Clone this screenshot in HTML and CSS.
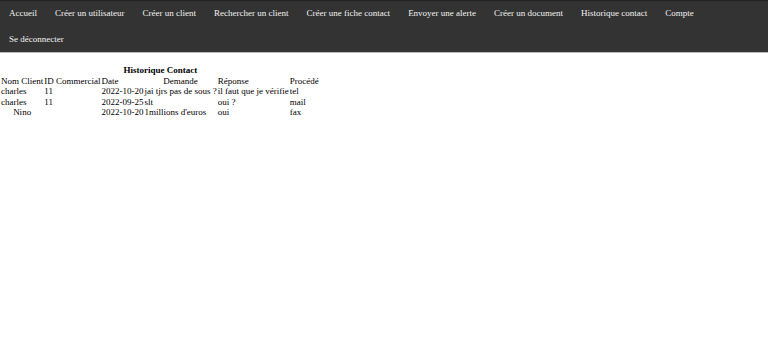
FILE: index.html
```html
<!DOCTYPE html>
<html lang="fr">
<head>
  <meta charset="UTF-8" />
  <title>Historique contact</title>
  <link rel="stylesheet" href="styles.css">
</head>
<body>

<!-- Barre de navigation -->
<ul class="topnav">
  <li><a href="#">Accueil</a></li>
  <li><a href="#">Créer un utilisateur</a></li>
  <li><a href="#">Créer un client</a></li>
  <li><a href="#">Rechercher un client</a></li>
  <li><a href="#">Créer une fiche contact</a></li>
  <li><a href="#">Envoyer une alerte</a></li>
  <li><a href="#">Créer un document</a></li>
  <li><a href="#">Historique contact</a></li>
  <li><a href="#">Compte</a></li>
  <li><a href="#">Se déconnecter</a></li>
</ul>

<table class="historique">
  <caption>Historique Contact</caption>
  <tr>
    <td>Nom Client</td>
    <td>ID Commercial</td>
    <td>Date</td>
    <td class="center">Demande</td>
    <td>Réponse</td>
    <td>Procédé</td>
  </tr>
  <tr>
    <td>charles</td>
    <td>11</td>
    <td>2022-10-20</td>
    <td>jai tjrs pas de sous ?</td>
    <td>il faut que je vérifie</td>
    <td>tel</td>
  </tr>
  <tr>
    <td>charles</td>
    <td>11</td>
    <td>2022-09-25</td>
    <td>slt</td>
    <td>oui ?</td>
    <td>mail</td>
  </tr>
  <tr>
    <td class="center">Nino</td>
    <td></td>
    <td>2022-10-20</td>
    <td>1millions d'euros</td>
    <td>oui</td>
    <td>fax</td>
  </tr>
</table>

</body>
</html>
```

FILE: styles.css
```css
body {
  margin: 0;
  font-family: "Liberation Serif", "Times New Roman", serif;
  font-size: 9px;
  background-color: #ffffff;
  color: #000;
}

/* Navigation */
.topnav {
  list-style-type: none;
  margin: 0;
  padding: 0;
  display: flex;
  flex-wrap: wrap;
  background-color: #333;
  border-top: 1px solid #222;
  border-bottom: 1px solid #bbb;
}
.topnav li a {
  display: block;
  color: #f2f2f2;
  text-decoration: none;
  padding: 7px 9px;
  line-height: 11.5px;
}

/* Tableau historique */
.historique {
  margin: 11px 1px 0;
  border-collapse: collapse;
}
.historique caption {
  font-weight: bold;
  line-height: 12px;
}
.historique td {
  padding: 0 1px 0 0;
  line-height: 10.3px;
  vertical-align: top;
}
.center {
  text-align: center;
}
```
